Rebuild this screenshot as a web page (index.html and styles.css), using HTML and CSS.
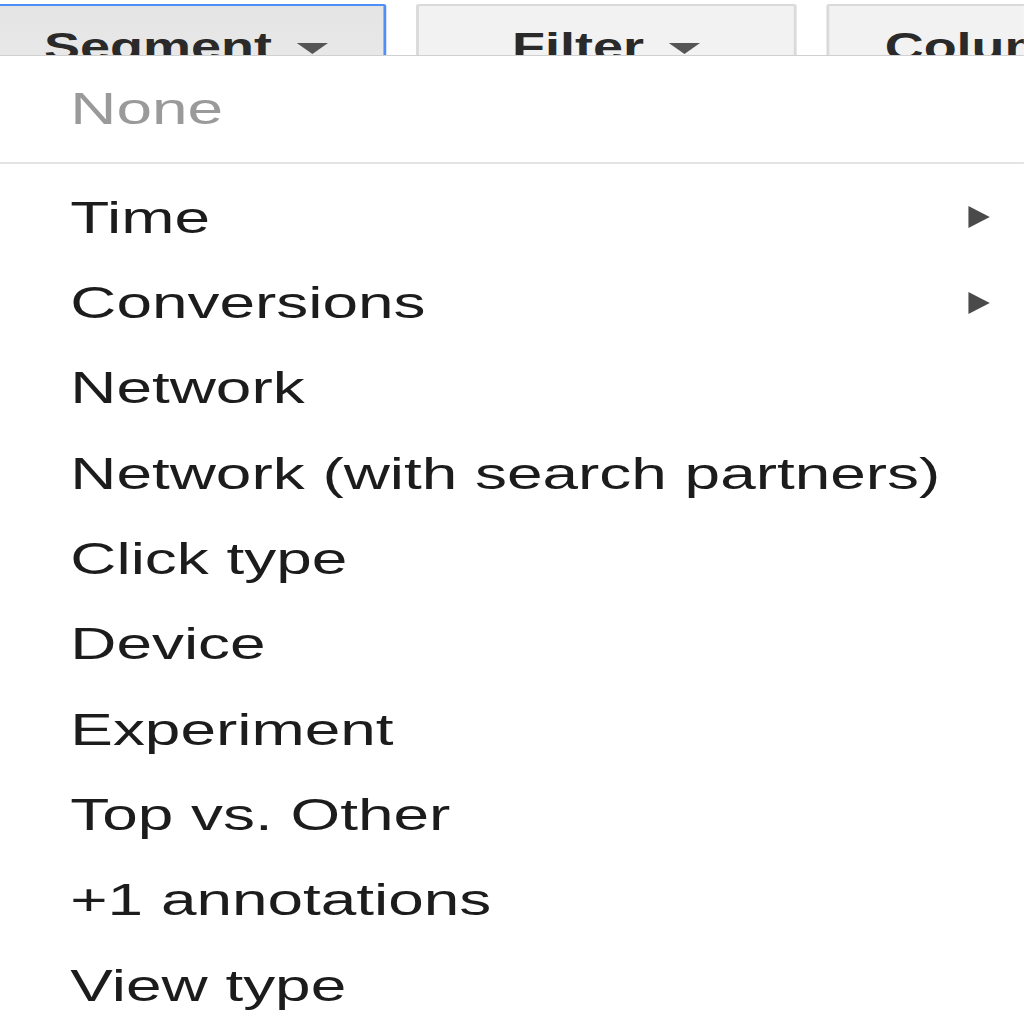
FILE: index.html
```html
<!DOCTYPE html>
<html lang="en">
<head>
<meta charset="utf-8">
<title>Segment menu</title>
<link rel="stylesheet" href="styles.css">
</head>
<body>
<div class="stage">
  <div class="toolbar">
    <div class="tab tab-active"><span class="tab-label">Segment</span><span class="caret"></span></div>
    <div class="tab tab-filter"><span class="tab-label">Filter</span><span class="caret"></span></div>
    <div class="tab tab-columns"><span class="tab-label">Columns</span><span class="caret"></span></div>
  </div>
  <div class="menu">
    <div class="menu-none">None</div>
    <div class="menu-list">
      <div class="item"><span>Time</span><span class="sub-arrow"></span></div>
      <div class="item"><span>Conversions</span><span class="sub-arrow"></span></div>
      <div class="item"><span>Network</span></div>
      <div class="item"><span>Network (with search partners)</span></div>
      <div class="item"><span>Click type</span></div>
      <div class="item"><span>Device</span></div>
      <div class="item"><span>Experiment</span></div>
      <div class="item"><span>Top vs. Other</span></div>
      <div class="item"><span>+1 annotations</span></div>
      <div class="item"><span>View type</span></div>
    </div>
  </div>
</div>
</body>
</html>
```
FILE: styles.css
```css
html, body {
  margin: 0;
  padding: 0;
  background: #ffffff;
  overflow: hidden;
  width: 1024px;
  height: 1024px;
}

.stage {
  width: 721.13px;
  height: 1024px;
  transform: scaleX(1.42);
  transform-origin: 0 0;
  font-family: "Liberation Sans", Arial, sans-serif;
  color: #1c1c1c;
}

.toolbar {
  display: flex;
  align-items: flex-start;
  gap: 21px;
  height: 51px;
  padding-top: 4px;
  overflow: hidden;
  background: #ffffff;
}

.tab {
  display: flex;
  align-items: flex-start;
  box-sizing: border-box;
  height: 90px;
  padding-top: 22px;
  border: 2px solid #dadada;
  border-radius: 2px;
  background: #f2f2f2;
  flex: none;
}

.tab-active {
  margin-left: -9px;
  width: 281px;
  padding-left: 38px;
  border-color: #4d8ef8;
  background: linear-gradient(#e4e4e4, #ebebeb);
}

.tab-filter {
  width: 268px;
  justify-content: center;
}

.tab-columns {
  width: 300px;
  padding-left: 39px;
}

.tab-label {
  font-weight: bold;
  font-size: 38px;
  line-height: 38px;
  color: #2a2a2a;
}

.caret {
  width: 0;
  height: 0;
  margin-left: 18px;
  margin-top: 15px;
  border-top: 11px solid #555555;
  border-left: 11px solid transparent;
  border-right: 11px solid transparent;
}

.menu {
  border-top: 1px solid #d0d0d0;
  background: #ffffff;
}

.menu-none {
  height: 106px;
  line-height: 106px;
  font-size: 45px;
  padding-left: 49.5px;
  color: #9a9a9a;
  border-bottom: 2px solid #e4e4e4;
}

.menu-list {
  padding-top: 10.8px;
}

.item {
  display: flex;
  align-items: center;
  justify-content: space-between;
  height: 85.33px;
  line-height: 85.33px;
  font-size: 45px;
  padding-left: 49.5px;
  padding-right: 24px;
  color: #1c1c1c;
  white-space: nowrap;
}

.sub-arrow {
  width: 0;
  height: 0;
  border-left: 15px solid #4a4a4a;
  border-top: 11px solid transparent;
  border-bottom: 11px solid transparent;
}
```
